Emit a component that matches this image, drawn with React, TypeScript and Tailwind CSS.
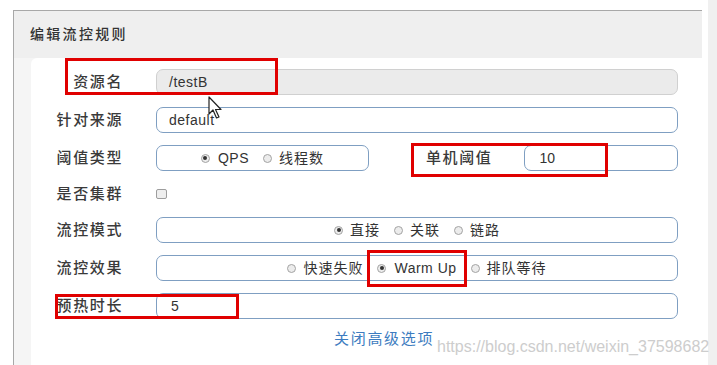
import React from 'react';

const FONT = "font-['Liberation_Sans','Noto_Sans_CJK_SC',sans-serif]";

const Radio: React.FC<{ checked?: boolean; label: string; latin?: boolean }> = ({ checked, label, latin }) => (
  <span className="flex items-center">
    <span className="w-[9px] h-[9px] rounded-full border border-[#a3a3a3] bg-[#ececec] flex items-center justify-center">
      {checked && <span className="w-[4px] h-[4px] rounded-full bg-[#333]" />}
    </span>
    <span
      className={
        latin
          ? 'ml-[8px] text-[14px] tracking-[0.5px] text-[#333]'
          : 'ml-[7px] text-[14px] tracking-[1px] text-[#333]'
      }
    >
      {label}
    </span>
  </span>
);

const Label: React.FC<{ children: React.ReactNode }> = ({ children }) => (
  <div className="w-[92px] shrink-0 text-right text-[15px] tracking-[1.6px] font-medium text-[#3a3a3a]">
    {children}
  </div>
);

const boxCls = 'h-[26px] border border-[#7f9fc2] rounded-[7px] bg-white flex items-center';

export default function App() {
  return (
    <div className={`relative w-[717px] h-[365px] bg-white overflow-hidden flex ${FONT}`}>
      {/* dialog */}
      <div className="pl-[13px] pt-[10px] w-[702px] shrink-0">
        <div className="h-full border-l border-t border-[#a8a8a8] flex flex-col">
          <div className="h-[47px] bg-[#efefef] flex items-center pl-[16px] text-[14px] tracking-[2.3px] font-medium text-[#333]">
            编辑流控规则
          </div>
          <div className="flex-1 flex bg-[#f5f5f5] pl-[17px]">
            <div className="flex-1 bg-white rounded-tl-[6px] pt-[11px] pr-[24px]">
              {/* 资源名 */}
              <div className="relative flex items-center mb-[12px]">
                <Label>资源名</Label>
                <div className="ml-[33px] flex-1 h-[26px] rounded-[7px] border border-[#d0d0d0] bg-[#ebebeb] flex items-center px-[12px] text-[14px] tracking-[0.5px] text-[#333]">
                  /testB
                </div>
                <span className="absolute left-[34px] top-[-11px] w-[213px] h-[37px] border-[3px] border-[#e00000]" />
              </div>

              {/* 针对来源 */}
              <div className="flex items-center mb-[12px]">
                <Label>针对来源</Label>
                <div className={`ml-[33px] flex-1 px-[12px] text-[14px] tracking-[0.5px] text-[#333] ${boxCls}`}>default</div>
              </div>

              {/* 阈值类型 / 单机阈值 */}
              <div className="relative flex items-center mb-[12px]">
                <Label>阈值类型</Label>
                <div className={`ml-[33px] w-[213px] justify-center gap-[14px] ${boxCls}`}>
                  <Radio checked label="QPS" latin />
                  <Radio label="线程数" />
                </div>
                <div className="ml-[57px] text-[15px] tracking-[1.6px] font-medium text-[#3a3a3a]">单机阈值</div>
                <div className={`ml-[32px] flex-1 px-[14px] text-[14px] text-[#333] ${boxCls}`}>10</div>
                <span className="absolute left-[380px] top-[-2px] w-[197px] h-[34px] border-[3px] border-[#e00000]" />
              </div>

              {/* 是否集群 */}
              <div className="flex items-center h-[22px] mb-[12px]">
                <Label>是否集群</Label>
                <span className="ml-[33px] w-[11px] h-[10px] rounded-[2px] border border-[#9d9d9d] bg-[#eeeeee]" />
              </div>

              {/* 流控模式 */}
              <div className="flex items-center mb-[12px]">
                <Label>流控模式</Label>
                <div className={`ml-[33px] flex-1 justify-center gap-[14px] ${boxCls}`}>
                  <Radio checked label="直接" />
                  <Radio label="关联" />
                  <Radio label="链路" />
                </div>
              </div>

              {/* 流控效果 */}
              <div className="flex items-center mb-[12px]">
                <Label>流控效果</Label>
                <div className={`ml-[33px] flex-1 justify-center gap-[14px] ${boxCls}`}>
                  <Radio label="快速失败" />
                  <span className="relative">
                    <Radio checked label="Warm Up" latin />
                    <span className="absolute left-[-10px] right-[-10px] top-[-8px] bottom-[-8px] border-[3px] border-[#e00000]" />
                  </span>
                  <Radio label="排队等待" />
                </div>
              </div>

              {/* 预热时长 */}
              <div className="relative flex items-center">
                <Label>预热时长</Label>
                <div className={`ml-[33px] flex-1 px-[14px] text-[14px] text-[#333] ${boxCls}`}>5</div>
                <span className="absolute left-[24px] top-[1px] w-[184px] h-[25px] border-[3px] border-[#e00000]" />
              </div>

              <div className="mt-[10px] pl-[303px] leading-[20px] text-[15px] tracking-[1.7px] text-[#3d7cc0]">
                关闭高级选项
              </div>
            </div>
          </div>
        </div>
      </div>
      <div className="w-[6px] shrink-0" />
      <div className="flex-1 bg-[#f0f0f0]" />

      {/* watermark */}
      <div className="absolute left-[437px] top-[337px] leading-[20px] text-[16px] text-[#cdcdcd] font-['Liberation_Sans',sans-serif] whitespace-nowrap">
        https://blog.csdn.net/weixin_37598682
      </div>

      {/* mouse cursor */}
      <svg className="absolute left-[208px] top-[96px]" width="16" height="24" viewBox="0 0 16 24">
        <path d="M1 1 L1 18 L5 14 L8.5 22 L11 21 L7.5 13.5 L13 13.5 Z" fill="#fff" stroke="#222" strokeWidth="1.2" strokeLinejoin="round" />
      </svg>
    </div>
  );
}
